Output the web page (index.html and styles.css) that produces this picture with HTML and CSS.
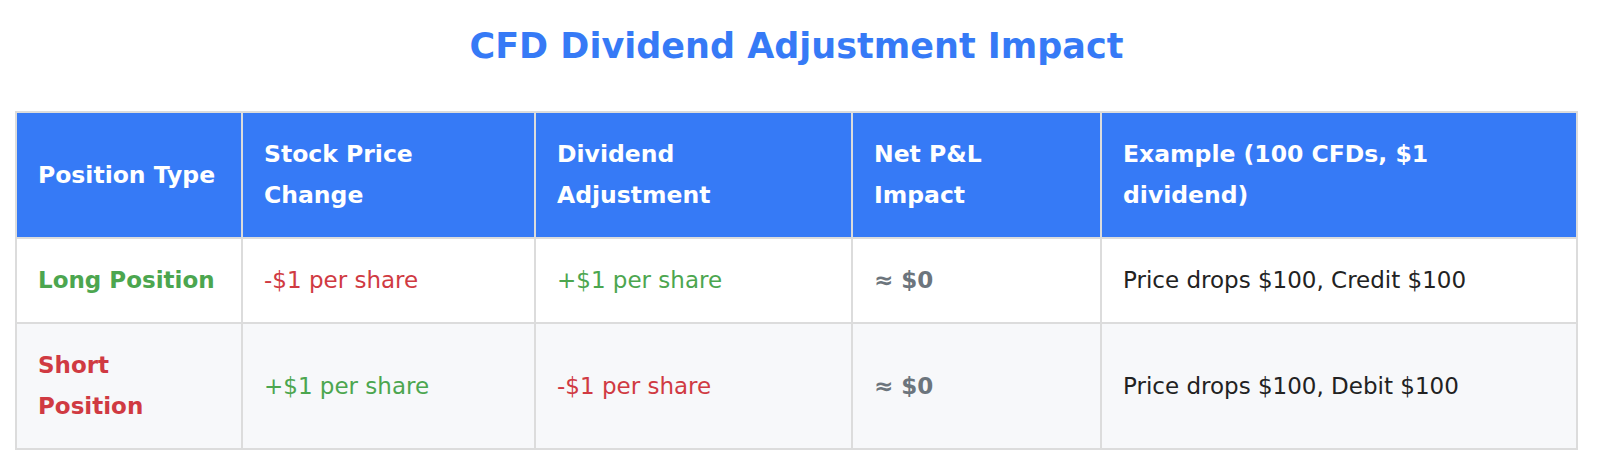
FILE: index.html
```html
<!DOCTYPE html>
<html lang="en">
<head>
<meta charset="utf-8">
<title>CFD Dividend Adjustment Impact</title>
<link rel="stylesheet" href="styles.css">
</head>
<body>
<div class="page">
  <h1 class="title">CFD Dividend Adjustment Impact</h1>
  <table class="impact">
    <colgroup>
      <col class="c1"><col class="c2"><col class="c3"><col class="c4"><col class="c5">
    </colgroup>
    <thead>
      <tr>
        <th>Position Type</th>
        <th>Stock Price<br>Change</th>
        <th>Dividend<br>Adjustment</th>
        <th>Net P&amp;L<br>Impact</th>
        <th>Example (100 CFDs, $1<br>dividend)</th>
      </tr>
    </thead>
    <tbody>
      <tr>
        <td class="pos long">Long Position</td>
        <td class="neg">-$1 per share</td>
        <td class="plus">+$1 per share</td>
        <td class="net">≈ $0</td>
        <td>Price drops $100, Credit $100</td>
      </tr>
      <tr class="alt">
        <td class="pos short">Short<br>Position</td>
        <td class="plus">+$1 per share</td>
        <td class="neg">-$1 per share</td>
        <td class="net">≈ $0</td>
        <td>Price drops $100, Debit $100</td>
      </tr>
    </tbody>
  </table>
</div>
</body>
</html>
```

FILE: styles.css
```css
html, body {
  margin: 0;
  padding: 0;
  background: #ffffff;
}

.page {
  padding: 0 22px 0 15px;
  font-family: "DejaVu Sans", Verdana, sans-serif;
  color: #222222;
}

.title {
  margin: 0;
  padding-top: 22px;
  height: 111px;
  box-sizing: border-box;
  text-align: center;
  font-size: 35px;
  line-height: 48px;
  font-weight: bold;
  color: #367af6;
}

.impact {
  width: 100%;
  border-collapse: collapse;
  table-layout: fixed;
  font-size: 23px;
  line-height: 41px;
}

.c1 { width: 226px; }
.c2 { width: 293px; }
.c3 { width: 317px; }
.c4 { width: 249px; }
.c5 { width: auto; }

.impact th,
.impact td {
  border: 2px solid #dcdcdc;
  padding: 21px 21px;
  text-align: left;
  vertical-align: middle;
  white-space: nowrap;
}

.impact th {
  background: #367af6;
  color: #ffffff;
  font-weight: bold;
  font-size: 23.5px;
}

.impact tr.alt td {
  background: #f7f8fa;
}

.pos { font-weight: bold; }
.long { color: #4ca64f; }
.short { color: #d03a42; }
.neg { color: #d03a42; }
.plus { color: #4ca64f; }
.net { color: #6c757d; font-weight: bold; }
```
